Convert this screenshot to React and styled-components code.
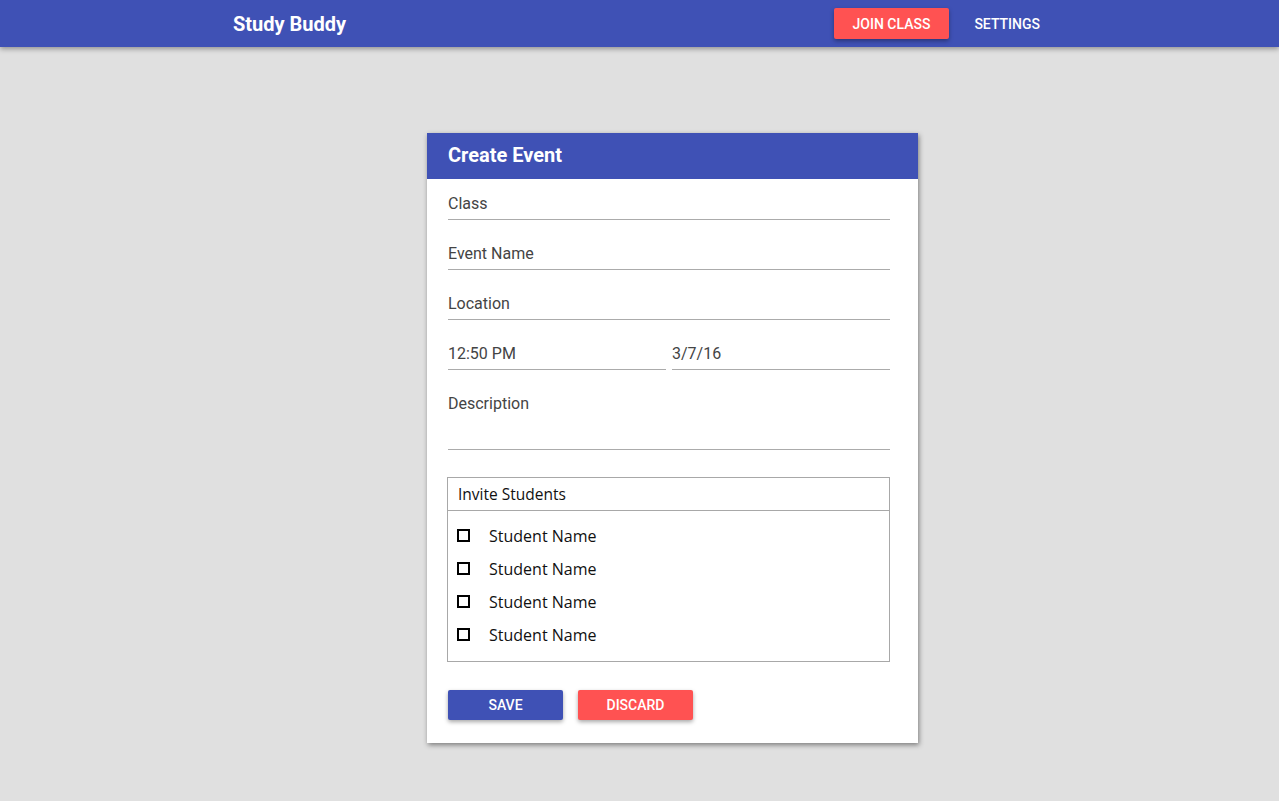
import React from 'react';
import styled, { createGlobalStyle } from 'styled-components';

const GlobalStyle = createGlobalStyle`
  html, body {
    margin: 0;
    padding: 0;
    background: #e0e0e0;
    font-family: Roboto, "Liberation Sans", sans-serif;
  }
  * { box-sizing: border-box; }
`;

const INDIGO = '#3f51b5';
const RED = '#ff5252';

const TopBar = styled.header`
  height: 47px;
  background: ${INDIGO};
  box-shadow: 0 2px 5px rgba(0, 0, 0, 0.35);
  display: flex;
  align-items: center;
  padding: 0 223px 0 233px;
  position: relative;
  z-index: 1;
`;

const Brand = styled.div`
  color: #fff;
  font-size: 20px;
  font-weight: 700;
  flex: 1;
`;

const Nav = styled.nav`
  display: flex;
  align-items: center;
  gap: 9px;
`;

const NavButton = styled.button`
  font-family: Roboto, "Liberation Sans", sans-serif;
  font-size: 14px;
  font-weight: 500;
  text-transform: uppercase;
  color: #fff;
  border: none;
  border-radius: 2px;
  height: 31px;
  padding: 0 ${p => (p.$raised ? 19 : 16)}px;
  background: ${p => (p.$raised ? RED : 'transparent')};
  box-shadow: ${p => (p.$raised ? '0 2px 4px rgba(0,0,0,0.35)' : 'none')};
  cursor: pointer;
`;

const Main = styled.main`
  display: flex;
  justify-content: center;
  padding: 86px 0 40px 66px;
`;

const Card = styled.section`
  width: 491px;
  background: #fff;
  box-shadow: 1px 2px 5px rgba(0, 0, 0, 0.45);
`;

const CardHeader = styled.div`
  height: 46px;
  background: ${INDIGO};
  color: #fff;
  font-size: 20px;
  font-weight: 700;
  display: flex;
  align-items: center;
  padding: 0 0 2px 21px;
`;

const CardBody = styled.div`
  padding: 0 28px 23px 21px;
`;

const Field = styled.div`
  height: ${p => (p.$tall ? 71 : 41)}px;
  display: flex;
  align-items: ${p => (p.$tall ? 'flex-start' : 'flex-end')};
  padding: ${p => (p.$tall ? '15px 0 0' : '0 0 5px')};
  border-bottom: 1px solid #ababab;
  margin-bottom: 9px;
  font-size: 16px;
  line-height: 20px;
  color: #444;
  flex: 1;
`;

const Row = styled.div`
  display: flex;
  gap: 6px;
`;

const InviteBox = styled.div`
  margin: 27px 0 28px -1px;
  border: 1px solid #a8a8a8;
  font-family: "Open Sans", "Noto Sans", sans-serif;
  color: #111;
`;

const InviteHeader = styled.div`
  height: 33px;
  border-bottom: 1px solid #a8a8a8;
  display: flex;
  align-items: center;
  padding-left: 10px;
  font-size: 15.5px;
`;

const StudentList = styled.ul`
  list-style: none;
  margin: 0;
  padding: 8px 0 10px 9px;
`;

const Student = styled.li`
  height: 33px;
  display: flex;
  align-items: center;
  font-size: 16px;
`;

const Box = styled.span`
  width: 13px;
  height: 13px;
  border: 2px solid #000;
  margin-right: 19px;
  flex-shrink: 0;
`;

const Actions = styled.div`
  display: flex;
  gap: 15px;
`;

const ActionButton = styled.button`
  width: 115px;
  height: 30px;
  border: none;
  border-radius: 2px;
  background: ${p => p.$color};
  color: #fff;
  font-family: Roboto, "Liberation Sans", sans-serif;
  font-size: 14px;
  font-weight: 500;
  text-transform: uppercase;
  box-shadow: 0 2px 4px rgba(0, 0, 0, 0.35);
  cursor: pointer;
`;

const students = ['Student Name', 'Student Name', 'Student Name', 'Student Name'];

export default function App() {
  return (
    <>
      <GlobalStyle />
      <TopBar>
        <Brand>Study Buddy</Brand>
        <Nav>
          <NavButton $raised>Join Class</NavButton>
          <NavButton>Settings</NavButton>
        </Nav>
      </TopBar>
      <Main>
        <Card>
          <CardHeader>Create Event</CardHeader>
          <CardBody>
            <Field>Class</Field>
            <Field>Event Name</Field>
            <Field>Location</Field>
            <Row>
              <Field>12:50 PM</Field>
              <Field>3/7/16</Field>
            </Row>
            <Field $tall>Description</Field>
            <InviteBox>
              <InviteHeader>Invite Students</InviteHeader>
              <StudentList>
                {students.map((name, i) => (
                  <Student key={i}>
                    <Box />
                    {name}
                  </Student>
                ))}
              </StudentList>
            </InviteBox>
            <Actions>
              <ActionButton $color={INDIGO}>Save</ActionButton>
              <ActionButton $color={RED}>Discard</ActionButton>
            </Actions>
          </CardBody>
        </Card>
      </Main>
    </>
  );
}
